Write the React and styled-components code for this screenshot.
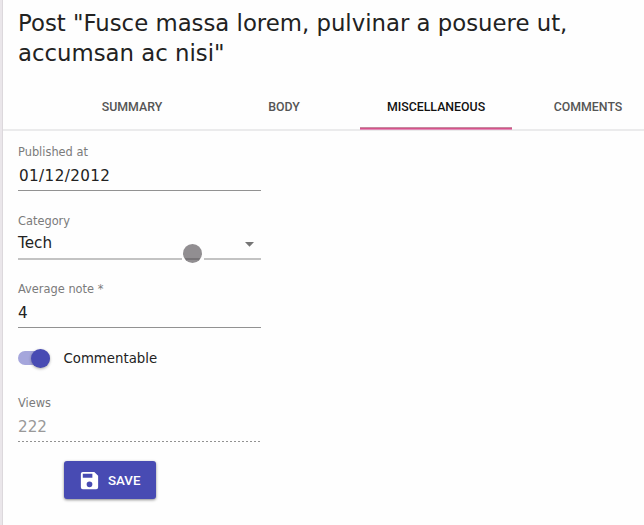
import React from 'react';
import styled, { createGlobalStyle } from 'styled-components';

const Global = createGlobalStyle`
  * { box-sizing: border-box; }
  body { margin: 0; background: #fefefe; font-family: "DejaVu Sans", sans-serif; color: #222; }
`;
const Page = styled.main`
  width: 644px; height: 525px; overflow: hidden;
  border-left: 2px solid #eae6ea; box-shadow: inset 1px 0 #dcd8dc; padding-left: 1px;
`;
const Title = styled.h1`
  margin: 0; padding: 8px 0 0 15px; height: 83px;
  font-size: 22.8px; line-height: 30px; font-weight: 400; width: 620px;
`;
const Tabs = styled.nav`
  display: flex; height: 48px; padding-left: 53px; width: 800px;
  box-shadow: inset 0 -2px #ebebec;
`;
const Tab = styled.button`
  flex: 0 0 152px; height: 46px; padding: 0; border: 0; background: none;
  box-shadow: ${p => (p.$active ? 'inset 0 -1px #d6528a, inset 0 -2px #c58a9f, 0 1px #e08fb8' : 'none')};
  font: 500 12.35px/48px Roboto, sans-serif; color: ${p => (p.$active ? '#111' : '#555')};
`;
const Form = styled.form`
  display: flex; flex-direction: column; padding-left: 15px; width: 258px;
`;
const Field = styled.label`
  display: flex; flex-direction: column; position: relative;
  height: ${p => p.$height}px; margin-top: ${p => p.$gap}px;
  border-bottom: ${p => (p.$soft ? '2px solid #c3c3c3' : '1px solid #929292')};
`;
const DisabledField = styled(Field)`
  border-bottom: 0;
  background: repeating-linear-gradient(90deg, #929292 0 2px, transparent 2px 4px) bottom / 100% 1px no-repeat;
`;
const Label = styled.span`
  font-size: 11.4px; line-height: 14px; color: #7b7b7b;
`;
const Value = styled.span`
  font-size: 15.2px; line-height: 20px; margin-top: ${p => p.$offset}px;
  color: ${p => (p.$disabled ? '#999' : '#222')};
`;
const DateValue = styled(Value)`
  letter-spacing: .38px; padding-left: 1px;
`;
const Arrow = styled.svg`
  position: absolute; right: 7px; top: 28px; width: 9px; height: 5px; fill: #757575;
`;
const Pointer = styled.span`
  position: absolute; left: 165px; top: 30px; width: 19px; height: 19px;
  &::before {
    content: ''; position: absolute; left: -1px; top: 13px;
    width: 22px; height: 4px; background: #fefefe;
  }
  &::after {
    content: ''; position: absolute; inset: 0; border-radius: 50%;
    background: linear-gradient(#918e91 14px, #777477 14px 16px, #918e91 16px);
  }
`;
const SwitchRow = styled.div`
  display: flex; align-items: center; height: 20px; margin-top: 20px; font-size: 13.3px;
`;
const Track = styled.span`
  display: flex; align-items: center; justify-content: flex-end;
  width: 32px; height: 14px; border-radius: 7px; background: #a5a6dc; margin-right: 13.5px;
`;
const Thumb = styled.span`
  flex: none; width: 19px; height: 19px; border-radius: 50%; background: #484bb3;
  box-shadow: 0 1px 3px #0005;
`;
const Save = styled.button`
  display: flex; align-items: center; gap: 7px; width: 92px; height: 38px;
  margin: 19px 0 0 45.5px; padding: 1px 0 0 14.5px; border: 0; border-radius: 3px;
  background: #484bb3; color: #fff; box-shadow: 0 1px 3px #0007;
  font: 500 13.3px/20px Roboto, sans-serif;
`;

export default function App() {
  return (
    <Page>
      <Global />
      <Title>Post "Fusce massa lorem, pulvinar a posuere ut, accumsan ac nisi"</Title>
      <Tabs>
        {['SUMMARY', 'BODY', 'MISCELLANEOUS', 'COMMENTS'].map(t => <Tab key={t} $active={t === 'MISCELLANEOUS'}>{t}</Tab>)}
      </Tabs>
      <Form>
        <Field $height={46} $gap={14}><Label>Published at</Label><DateValue $offset={7}>01/12/2012</DateValue></Field>
        <Field $height={46} $gap={23} $soft>
          <Label>Category</Label><Value $offset={5}>Tech</Value>
          <Arrow viewBox="0 0 9 5"><path d="M0 0h9L4.5 4.7z" /></Arrow><Pointer />
        </Field>
        <Field $height={46} $gap={22}><Label>Average note *</Label><Value $offset={7}>4</Value></Field>
        <SwitchRow><Track><Thumb /></Track>Commentable</SwitchRow>
        <DisabledField $height={46} $gap={28}><Label>Views</Label><Value $offset={7} $disabled>222</Value></DisabledField>
        <Save type="button">
          <svg width="23" height="23" viewBox="0 0 24 24" fill="#fff"><path d="M17 3H5a2 2 0 0 0-2 2v14a2 2 0 0 0 2 2h14a2 2 0 0 0 2-2V7l-4-4zm-5 16a3 3 0 1 1 0-6 3 3 0 0 1 0 6zm3-10H5V5h10v4z" /></svg>
          SAVE
        </Save>
      </Form>
    </Page>
  );
}
